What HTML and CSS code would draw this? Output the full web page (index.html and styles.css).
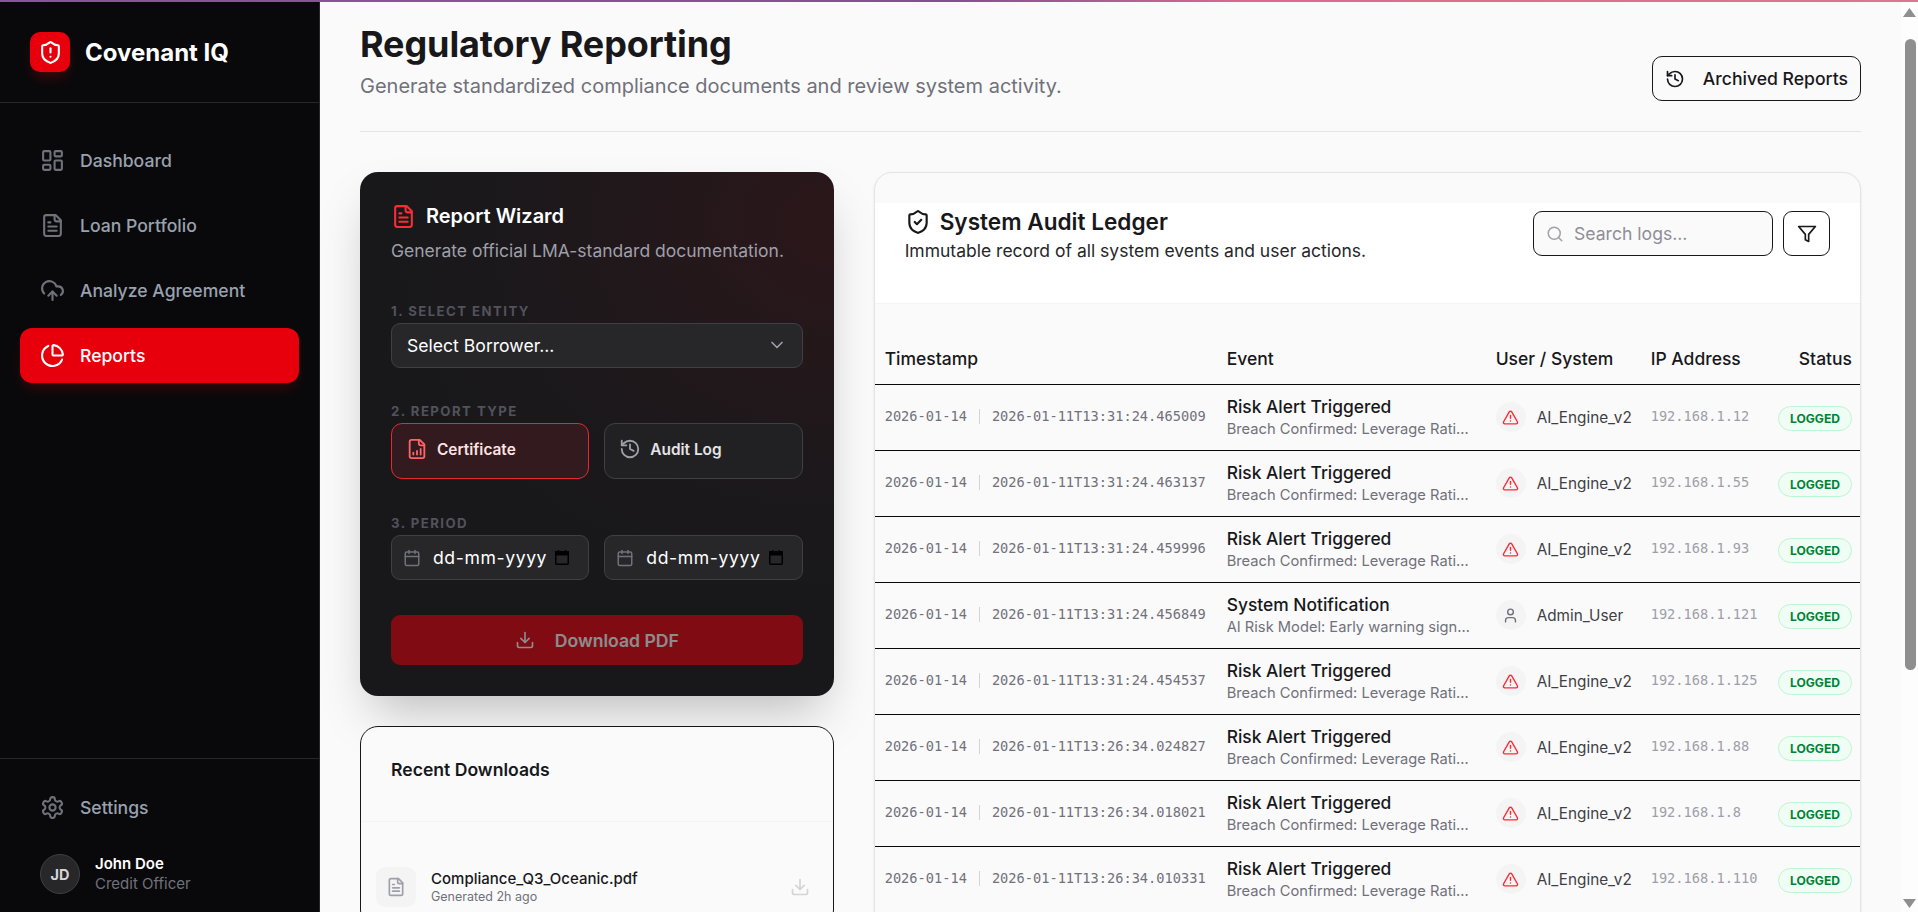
FILE: index.html
```html
<!DOCTYPE html>
<html lang="en">
<head>
<meta charset="utf-8">
<title>Covenant IQ - Regulatory Reporting</title>
<link rel="stylesheet" href="styles.css">
</head>
<body>
<svg class="defs" aria-hidden="true">
  <symbol id="i-shield-alert" viewBox="0 0 24 24"><path d="M20 13c0 5-3.5 7.5-7.66 8.95a1 1 0 0 1-.67-.01C7.5 20.5 4 18 4 13V6a1 1 0 0 1 1-1c2 0 4.5-1.2 6.24-2.72a1.17 1.17 0 0 1 1.52 0C14.51 3.81 17 5 19 5a1 1 0 0 1 1 1z"/><path d="M12 8v4"/><path d="M12 16h.01"/></symbol>
  <symbol id="i-shield-check" viewBox="0 0 24 24"><path d="M20 13c0 5-3.5 7.5-7.66 8.95a1 1 0 0 1-.67-.01C7.5 20.5 4 18 4 13V6a1 1 0 0 1 1-1c2 0 4.5-1.2 6.24-2.72a1.17 1.17 0 0 1 1.52 0C14.51 3.81 17 5 19 5a1 1 0 0 1 1 1z"/><path d="m9 12 2 2 4-4"/></symbol>
  <symbol id="i-dash" viewBox="0 0 24 24"><rect x="3" y="3" width="7" height="9" rx="1"/><rect x="14" y="3" width="7" height="5" rx="1"/><rect x="14" y="12" width="7" height="9" rx="1"/><rect x="3" y="16" width="7" height="5" rx="1"/></symbol>
  <symbol id="i-file" viewBox="0 0 24 24"><path d="M15 2H6a2 2 0 0 0-2 2v16a2 2 0 0 0 2 2h12a2 2 0 0 0 2-2V7Z"/><path d="M14 2v4a2 2 0 0 0 2 2h4"/><path d="M10 9H8"/><path d="M16 13H8"/><path d="M16 17H8"/></symbol>
  <symbol id="i-file-chart" viewBox="0 0 24 24"><path d="M15 2H6a2 2 0 0 0-2 2v16a2 2 0 0 0 2 2h12a2 2 0 0 0 2-2V7Z"/><path d="M14 2v4a2 2 0 0 0 2 2h4"/><path d="M8 18v-2"/><path d="M12 18v-4"/><path d="M16 18v-6"/></symbol>
  <symbol id="i-cloud" viewBox="0 0 24 24"><path d="M12 13v8"/><path d="M4 14.899A7 7 0 1 1 15.71 8h1.79a4.5 4.5 0 0 1 2.5 8.242"/><path d="m8 17 4-4 4 4"/></symbol>
  <symbol id="i-pie" viewBox="0 0 24 24"><path d="M21 12c.552 0 1.005-.449.95-.998a10 10 0 0 0-8.953-8.951c-.55-.055-.998.398-.998.95v8a1 1 0 0 0 1 1z"/><path d="M21.21 15.89A10 10 0 1 1 8 2.83"/></symbol>
  <symbol id="i-gear" viewBox="0 0 24 24"><path d="M12.22 2h-.44a2 2 0 0 0-2 2v.18a2 2 0 0 1-1 1.73l-.43.25a2 2 0 0 1-2 0l-.15-.08a2 2 0 0 0-2.73.73l-.22.38a2 2 0 0 0 .73 2.73l.15.1a2 2 0 0 1 1 1.72v.51a2 2 0 0 1-1 1.74l-.15.09a2 2 0 0 0-.73 2.73l.22.38a2 2 0 0 0 2.73.73l.15-.08a2 2 0 0 1 2 0l.43.25a2 2 0 0 1 1 1.73V20a2 2 0 0 0 2 2h.44a2 2 0 0 0 2-2v-.18a2 2 0 0 1 1-1.73l.43-.25a2 2 0 0 1 2 0l.15.08a2 2 0 0 0 2.73-.73l.22-.39a2 2 0 0 0-.73-2.73l-.15-.08a2 2 0 0 1-1-1.74v-.5a2 2 0 0 1 1-1.74l.15-.09a2 2 0 0 0 .73-2.73l-.22-.38a2 2 0 0 0-2.73-.73l-.15.08a2 2 0 0 1-2 0l-.43-.25a2 2 0 0 1-1-1.73V4a2 2 0 0 0-2-2z"/><circle cx="12" cy="12" r="3"/></symbol>
  <symbol id="i-history" viewBox="0 0 24 24"><path d="M3 12a9 9 0 1 0 9-9 9.75 9.75 0 0 0-6.74 2.74L3 8"/><path d="M3 3v5h5"/><path d="M12 7v5l4 2"/></symbol>
  <symbol id="i-cal" viewBox="0 0 24 24"><path d="M8 2v4"/><path d="M16 2v4"/><rect x="3" y="4" width="18" height="18" rx="2"/><path d="M3 10h18"/></symbol>
  <symbol id="i-down" viewBox="0 0 24 24"><path d="M21 15v4a2 2 0 0 1-2 2H5a2 2 0 0 1-2-2v-4"/><path d="m7 10 5 5 5-5"/><path d="M12 15V3"/></symbol>
  <symbol id="i-search" viewBox="0 0 24 24"><circle cx="11" cy="11" r="8"/><path d="m21 21-4.3-4.3"/></symbol>
  <symbol id="i-filter" viewBox="0 0 24 24"><path d="M22 3H2l8 9.46V19l4 2v-8.54z"/></symbol>
  <symbol id="i-alert" viewBox="0 0 24 24"><path d="m21.73 18-8-14a2 2 0 0 0-3.48 0l-8 14A2 2 0 0 0 4 21h16a2 2 0 0 0 1.73-3"/><path d="M12 9v4"/><path d="M12 17h.01"/></symbol>
  <symbol id="i-user" viewBox="0 0 24 24"><path d="M19 21v-2a4 4 0 0 0-4-4H9a4 4 0 0 0-4 4v2"/><circle cx="12" cy="7" r="4"/></symbol>
  <symbol id="i-chev" viewBox="0 0 24 24"><path d="m6 9 6 6 6-6"/></symbol>
  <symbol id="i-picker" viewBox="0 0 14 15"><path d="M3.5 0v2M10.5 0v2" class="pick-line"/><rect x=".75" y="1.75" width="12.5" height="12.5" rx="1" class="pick-line"/><rect x=".75" y="1.75" width="12.5" height="3" class="pick-fill"/></symbol>
</svg>

<div class="topline"></div>
<div class="app">
  <aside class="sidebar">
    <div class="brand">
      <span class="brand-mark"><svg class="ico ico-25"><use href="#i-shield-alert"/></svg></span>
      <span class="brand-name">Covenant IQ</span>
    </div>
    <nav class="nav">
      <a class="nav-item"><svg class="ico ico-25"><use href="#i-dash"/></svg>Dashboard</a>
      <a class="nav-item"><svg class="ico ico-25"><use href="#i-file"/></svg>Loan Portfolio</a>
      <a class="nav-item"><svg class="ico ico-25"><use href="#i-cloud"/></svg>Analyze Agreement</a>
      <a class="nav-item active"><svg class="ico ico-25"><use href="#i-pie"/></svg>Reports</a>
    </nav>
    <div class="side-foot">
      <a class="nav-item"><svg class="ico ico-25"><use href="#i-gear"/></svg>Settings</a>
      <div class="profile">
        <span class="avatar">JD</span>
        <div class="profile-text">
          <div class="profile-name">John Doe</div>
          <div class="profile-role">Credit Officer</div>
        </div>
      </div>
    </div>
  </aside>

  <main class="main" id="main">
    <header class="page-head">
      <div>
        <h1 class="page-title">Regulatory Reporting</h1>
        <p class="page-sub">Generate standardized compliance documents and review system activity.</p>
      </div>
      <button class="btn-outline"><svg class="ico ico-20"><use href="#i-history"/></svg>Archived Reports</button>
    </header>

    <div class="layout">
      <div class="left-col">
        <section class="wizard">
          <h2 class="wizard-title"><svg class="ico ico-25"><use href="#i-file"/></svg>Report Wizard</h2>
          <p class="wizard-sub">Generate official LMA-standard documentation.</p>

          <label class="step-label step-first">1. Select Entity</label>
          <div class="select-wrap">
            <select class="select"><option>Select Borrower...</option></select>
            <svg class="ico ico-20 select-chev"><use href="#i-chev"/></svg>
          </div>

          <label class="step-label">2. Report Type</label>
          <div class="two-col">
            <button class="type-btn selected"><svg class="ico ico-22"><use href="#i-file-chart"/></svg>Certificate</button>
            <button class="type-btn"><svg class="ico ico-22"><use href="#i-history"/></svg>Audit Log</button>
          </div>

          <label class="step-label step-third">3. Period</label>
          <div class="two-col">
            <div class="date-wrap"><svg class="ico ico-18"><use href="#i-cal"/></svg><span class="date">dd-mm-yyyy</span><svg class="picker"><use href="#i-picker"/></svg></div>
            <div class="date-wrap"><svg class="ico ico-18"><use href="#i-cal"/></svg><span class="date">dd-mm-yyyy</span><svg class="picker"><use href="#i-picker"/></svg></div>
          </div>

          <button class="btn-primary" disabled><svg class="ico ico-20"><use href="#i-down"/></svg>Download PDF</button>
        </section>

        <section class="recent">
          <h3 class="recent-title">Recent Downloads</h3>
          <ul class="recent-list">
            <li class="recent-item">
              <span class="file-box"><svg class="ico ico-20"><use href="#i-file"/></svg></span>
              <div class="file-text">
                <div class="file-name">Compliance_Q3_Oceanic.pdf</div>
                <div class="file-meta">Generated 2h ago</div>
              </div>
              <svg class="ico ico-20 file-dl"><use href="#i-down"/></svg>
            </li>
          </ul>
        </section>
      </div>

      <section class="ledger">
        <div class="ledger-head">
          <div>
            <h2 class="ledger-title"><svg class="ico ico-26"><use href="#i-shield-check"/></svg>System Audit Ledger</h2>
            <p class="ledger-sub">Immutable record of all system events and user actions.</p>
          </div>
          <div class="ledger-tools">
            <div class="search"><svg class="ico ico-18"><use href="#i-search"/></svg><span class="search-ph">Search logs...</span></div>
            <button class="icon-btn"><svg class="ico ico-20"><use href="#i-filter"/></svg></button>
          </div>
        </div>
        <table class="table">
          <colgroup><col class="c1"><col class="c2"><col class="c3"><col class="c4"><col></colgroup>
          <thead>
            <tr><th>Timestamp</th><th>Event</th><th>User / System</th><th>IP Address</th><th class="right">Status</th></tr>
          </thead>
          <tbody>
            <tr><td class="ts"><span>2026-01-14</span><i class="sep"></i><span>2026-01-11T13:31:24.465009</span></td><td class="ev-cell"><div class="ev">Risk Alert Triggered</div><div class="ev-sub">Breach Confirmed: Leverage Ratio exceeded threshold</div></td><td><div class="who"><span class="who-ico red"><svg class="ico ico-17"><use href="#i-alert"/></svg></span>AI_Engine_v2</div></td><td class="ip">192.168.1.12</td><td class="right"><span class="badge">LOGGED</span></td></tr>
            <tr><td class="ts"><span>2026-01-14</span><i class="sep"></i><span>2026-01-11T13:31:24.463137</span></td><td class="ev-cell"><div class="ev">Risk Alert Triggered</div><div class="ev-sub">Breach Confirmed: Leverage Ratio exceeded threshold</div></td><td><div class="who"><span class="who-ico red"><svg class="ico ico-17"><use href="#i-alert"/></svg></span>AI_Engine_v2</div></td><td class="ip">192.168.1.55</td><td class="right"><span class="badge">LOGGED</span></td></tr>
            <tr><td class="ts"><span>2026-01-14</span><i class="sep"></i><span>2026-01-11T13:31:24.459996</span></td><td class="ev-cell"><div class="ev">Risk Alert Triggered</div><div class="ev-sub">Breach Confirmed: Leverage Ratio exceeded threshold</div></td><td><div class="who"><span class="who-ico red"><svg class="ico ico-17"><use href="#i-alert"/></svg></span>AI_Engine_v2</div></td><td class="ip">192.168.1.93</td><td class="right"><span class="badge">LOGGED</span></td></tr>
            <tr><td class="ts"><span>2026-01-14</span><i class="sep"></i><span>2026-01-11T13:31:24.456849</span></td><td class="ev-cell"><div class="ev">System Notification</div><div class="ev-sub">AI Risk Model: Early warning signals detected</div></td><td><div class="who"><span class="who-ico"><svg class="ico ico-17"><use href="#i-user"/></svg></span>Admin_User</div></td><td class="ip">192.168.1.121</td><td class="right"><span class="badge">LOGGED</span></td></tr>
            <tr><td class="ts"><span>2026-01-14</span><i class="sep"></i><span>2026-01-11T13:31:24.454537</span></td><td class="ev-cell"><div class="ev">Risk Alert Triggered</div><div class="ev-sub">Breach Confirmed: Leverage Ratio exceeded threshold</div></td><td><div class="who"><span class="who-ico red"><svg class="ico ico-17"><use href="#i-alert"/></svg></span>AI_Engine_v2</div></td><td class="ip">192.168.1.125</td><td class="right"><span class="badge">LOGGED</span></td></tr>
            <tr><td class="ts"><span>2026-01-14</span><i class="sep"></i><span>2026-01-11T13:26:34.024827</span></td><td class="ev-cell"><div class="ev">Risk Alert Triggered</div><div class="ev-sub">Breach Confirmed: Leverage Ratio exceeded threshold</div></td><td><div class="who"><span class="who-ico red"><svg class="ico ico-17"><use href="#i-alert"/></svg></span>AI_Engine_v2</div></td><td class="ip">192.168.1.88</td><td class="right"><span class="badge">LOGGED</span></td></tr>
            <tr><td class="ts"><span>2026-01-14</span><i class="sep"></i><span>2026-01-11T13:26:34.018021</span></td><td class="ev-cell"><div class="ev">Risk Alert Triggered</div><div class="ev-sub">Breach Confirmed: Leverage Ratio exceeded threshold</div></td><td><div class="who"><span class="who-ico red"><svg class="ico ico-17"><use href="#i-alert"/></svg></span>AI_Engine_v2</div></td><td class="ip">192.168.1.8</td><td class="right"><span class="badge">LOGGED</span></td></tr>
            <tr><td class="ts"><span>2026-01-14</span><i class="sep"></i><span>2026-01-11T13:26:34.010331</span></td><td class="ev-cell"><div class="ev">Risk Alert Triggered</div><div class="ev-sub">Breach Confirmed: Leverage Ratio exceeded threshold</div></td><td><div class="who"><span class="who-ico red"><svg class="ico ico-17"><use href="#i-alert"/></svg></span>AI_Engine_v2</div></td><td class="ip">192.168.1.110</td><td class="right"><span class="badge">LOGGED</span></td></tr>
            <tr><td class="ts"><span>2026-01-14</span><i class="sep"></i><span>2026-01-11T13:26:34.006412</span></td><td class="ev-cell"><div class="ev">Risk Alert Triggered</div><div class="ev-sub">Breach Confirmed: Leverage Ratio exceeded threshold</div></td><td><div class="who"><span class="who-ico red"><svg class="ico ico-17"><use href="#i-alert"/></svg></span>AI_Engine_v2</div></td><td class="ip">192.168.1.47</td><td class="right"><span class="badge">LOGGED</span></td></tr>
          </tbody>
        </table>
      </section>
    </div>
  </main>

  <div class="rail" aria-hidden="true">
    <div class="rail-btn rail-up"><svg class="rail-arrow" viewBox="0 0 13 9"><path d="M6.5 0 13 9H0z"/></svg></div>
    <div class="rail-track"><div class="rail-thumb"></div></div>
    <div class="rail-btn rail-down"><svg class="rail-arrow" viewBox="0 0 13 9"><path d="M0 0h13L6.5 9z"/></svg></div>
  </div>
</div>
<script src="app.js"></script>
</body>
</html>
```

FILE: styles.css
```css
* { box-sizing: border-box; }
html, body { height: 100%; margin: 0; }
body {
  display: flex;
  flex-direction: column;
  overflow: hidden;
  font-family: Inter, "Liberation Sans", sans-serif;
  color: #18181b;
  background: #fafafa;
}
.defs { width: 0; height: 0; position: absolute; }
.ico { fill: none; stroke: currentColor; stroke-width: 2; stroke-linecap: round; stroke-linejoin: round; flex: none; display: block; }
.ico-17 { width: 17px; height: 17px; }
.ico-18 { width: 18px; height: 18px; }
.ico-20 { width: 20px; height: 20px; }
.ico-22 { width: 22px; height: 22px; }
.ico-25 { width: 25px; height: 25px; }
.ico-26 { width: 26px; height: 26px; }

.topline { height: 2px; flex: none; background: linear-gradient(90deg, #8b559b, #85508f 50%, #d96b8f 65%, #d9788f); }
.app { flex: 1; min-height: 0; display: flex; }

/* sidebar */
.sidebar { width: 320px; flex: none; display: flex; flex-direction: column; background: #09090b; border-right: 1px solid #27272a; }
.brand { height: 101px; flex: none; display: flex; align-items: center; gap: 15px; padding: 0 30px; border-bottom: 1px solid #27272a; }
.brand-mark { width: 40px; height: 40px; border-radius: 10px; background: #e7000b; color: #fff; display: flex; align-items: center; justify-content: center; box-shadow: 0 8px 14px -4px rgba(231,0,11,.3); }
.brand-name { font-size: 24px; font-weight: 700; color: #fff; }
.nav { flex: 1; display: flex; flex-direction: column; gap: 10px; padding: 30px 20px; }
.nav-item { height: 55px; display: flex; align-items: center; gap: 15px; padding: 0 20px; border-radius: 12px; font-size: 17.6px; font-weight: 500; color: #99a1af; }
.nav-item .ico { color: #71717b; }
.nav-item.active { background: #e7000b; color: #fff; box-shadow: 0 8px 14px -4px rgba(231,0,11,.25); }
.nav-item.active .ico { color: #fff; }
.side-foot { flex: none; height: 154px; padding: 21px 20px 0; border-top: 1px solid #27272a; }
.profile { display: flex; align-items: center; gap: 15px; padding: 0 20px; margin-top: 19px; }
.avatar { width: 40px; height: 40px; border-radius: 50%; background: #27272a; border: 1px solid #3f3f46; color: #d4d4d8; font-size: 14.5px; font-weight: 700; display: flex; align-items: center; justify-content: center; }
.profile-name { font-size: 15px; font-weight: 600; color: #fff; line-height: 20px; }
.profile-role { font-size: 15px; color: #71717b; line-height: 20px; }

/* main */
.main { flex: 1; min-width: 0; overflow-y: auto; scrollbar-width: none; padding: 51px 40px 40px; background: #fafafa; }
.rail { width: 17px; flex: none; display: flex; flex-direction: column; background: #fdfdfd; }
.rail-btn { height: 17px; flex: none; display: flex; justify-content: center; }
.rail-up { padding-top: 6px; }
.rail-down { padding-top: 4px; }
.rail-arrow { width: 13px; height: 9px; fill: #8f8f8f; display: block; }
.rail-track { flex: 1; min-height: 0; padding-top: 20px; }
.rail-thumb { width: 11px; height: 631px; margin-left: 4px; border-radius: 6px; background: #8f8f8f; }

.page-head { display: flex; justify-content: space-between; align-items: flex-end; padding-bottom: 31px; border-bottom: 1px solid #e4e4e7; }
.page-title { margin: 0; font-size: 36px; line-height: 40px; font-weight: 700; color: #18181b; letter-spacing: -.1px; }
.page-sub { margin: 8px 0 0; font-size: 20px; line-height: 28px; color: #71717b; }
.btn-outline { height: 45px; margin-bottom: -1px; display: flex; align-items: center; gap: 18px; padding: 0 12px; background: transparent; border: 1px solid #18181b; border-radius: 10px; font: 500 17.6px Inter, sans-serif; color: #18181b; }

.layout { display: grid; grid-template-columns: repeat(3, minmax(0, 1fr)); column-gap: 40px; align-items: start; margin-top: 40px; }
.left-col { display: flex; flex-direction: column; gap: 30px; min-width: 0; }

/* wizard */
.wizard { padding: 30px 31px 31px; border-radius: 18px; color: #fff; background: radial-gradient(120% 90% at 100% 10%, #2b171a 0%, #1c181b 55%, #18181b 80%), #18181b; box-shadow: 0 25px 50px -12px rgba(0,0,0,.25); }
.wizard-title { margin: 0; display: flex; align-items: center; gap: 10px; font-size: 20px; line-height: 28px; font-weight: 600; }
.wizard-title .ico { color: #fb2c36; }
.wizard-sub { margin: 8px 0 0; font-size: 17.5px; line-height: 26px; color: #9f9fa9; }
.step-label { display: block; margin: 35px 0 4px; font-size: 13.2px; line-height: 16px; font-weight: 700; letter-spacing: .11em; text-transform: uppercase; color: #52525c; }
.step-first { margin-top: 39px; }
.step-third { margin-top: 36px; }
.select-wrap { position: relative; }
.select { display: block; width: 100%; height: 45px; appearance: none; padding: 0 15px; border: 1px solid #3f3f46; border-radius: 9px; background: #27272a; color: #fff; font: 400 17.6px Inter, sans-serif; }
.select-chev { position: absolute; right: 16px; top: 12px; color: #9f9fa9; }
.two-col { display: grid; grid-template-columns: repeat(2, minmax(0, 1fr)); gap: 15px; }
.type-btn { height: 56px; display: flex; align-items: center; gap: 9px; padding: 0 14px 4px; border: 1px solid #3f3f46; border-radius: 11px; background: #212124; color: #e4e4e7; font: 600 15.4px Inter, sans-serif; }
.type-btn .ico { color: #9f9fa9; }
.type-btn.selected { background: #321a1e; border-color: #e7282f; color: #ffe2e2; }
.type-btn.selected .ico { color: #ff6467; }
.date-wrap { height: 45px; display: flex; align-items: center; gap: 12px; padding: 0 19px 0 11px; border: 1px solid #3f3f46; border-radius: 9px; background: #27272a; color: #71717b; }
.date { flex: 1; min-width: 0; color: #fff; font-size: 17.6px; font-weight: 400; letter-spacing: .6px; white-space: nowrap; }
.picker { width: 14px; height: 15px; flex: none; display: block; }
.pick-line { fill: none; stroke: #000; stroke-width: 1.5; }
.pick-fill { fill: #000; stroke: #000; stroke-width: 1.5; }
.btn-primary { width: 100%; height: 50px; margin-top: 35px; display: flex; align-items: center; justify-content: center; gap: 20px; border: 0; border-radius: 9px; background: #e7000b; color: #fff; opacity: .5; font: 600 17.6px Inter, sans-serif; }

/* recent */
.recent { border: 1px solid #18181b; border-radius: 18px; background: #fafafa; }
.recent-title { margin: 0; height: 95px; padding: 30px 30px 0; font-size: 17.6px; line-height: 26px; font-weight: 600; border-bottom: 1px solid #f4f4f5; }
.recent-list { list-style: none; margin: 0; padding: 45px 15px 20px; }
.recent-item { display: flex; align-items: center; gap: 15px; }
.file-box { width: 40px; height: 40px; border-radius: 9px; background: #f4f4f5; color: #9f9fa9; display: flex; align-items: center; justify-content: center; }
.file-text { flex: 1; min-width: 0; padding-top: 1px; }
.file-name { font-size: 15px; line-height: 18px; font-weight: 500; color: #18181b; }
.file-meta { font-size: 12.5px; line-height: 18px; color: #71717b; }
.file-dl { color: #d4d4d8; margin-right: 8px; }

/* ledger */
.ledger { grid-column: span 2; min-width: 0; padding: 30px 0 19px; border: 1px solid #e4e4e7; border-radius: 18px; background: #fafafa; box-shadow: 0 1px 3px rgba(0,0,0,.08); overflow: hidden; }
.ledger-head { height: 101px; display: flex; justify-content: space-between; align-items: flex-start; padding: 6px 30px 0; background: #fff; border-bottom: 1px solid #f4f4f5; }
.ledger-title { margin: 0; display: flex; align-items: center; gap: 9px; font-size: 22.6px; line-height: 26px; font-weight: 600; color: #18181b; }
.ledger-sub { margin: 4px 0 0; font-size: 17.5px; line-height: 24px; color: #27272a; }
.ledger-tools { display: flex; gap: 10px; padding-top: 2px; }
.search { width: 240px; height: 45px; display: flex; align-items: center; gap: 10px; padding: 0 12px; border: 1px solid #18181b; border-radius: 9px; background: #fafafa; color: #a1a1aa; }
.search-ph { font-size: 17.6px; color: #8e8e98; }
.icon-btn { width: 47px; height: 45px; display: flex; align-items: center; justify-content: center; padding: 0; background: #fff; border: 1px solid #18181b; border-radius: 9px; color: #18181b; }

.table { width: 100%; border-collapse: collapse; table-layout: fixed; background: #fafafa; }
.c1 { width: 342px; } .c2 { width: 269px; } .c3 { width: 155px; } .c4 { width: 129px; }
.table th { height: 80px; padding: 43px 9px 12px 10px; text-align: left; vertical-align: middle; font-size: 17.5px; line-height: 24px; font-weight: 500; color: #18181b; border-bottom: 1px solid #09090b; }
.table td { height: 66px; padding: 0 9px 0 10px; vertical-align: middle; border-bottom: 1px solid #09090b; }
.table .right { text-align: right; padding-left: 0; padding-right: 8px; }
.table .ev-cell { padding-top: 1px; }
.table .ts { padding-bottom: 2px; font: 13.66px "DejaVu Sans Mono", monospace; color: #71717b; white-space: nowrap; }
.sep { display: inline-block; width: 1px; height: 15px; margin: 0 12px; background: #d4d4d8; vertical-align: middle; }
.ev { font-size: 17.4px; line-height: 22px; font-weight: 500; color: #18181b; }
.ev-sub { margin-top: 1px; font-size: 14.7px; line-height: 20px; color: #71717b; white-space: nowrap; overflow: hidden; text-overflow: ellipsis; width: 246px; }
.who { display: flex; align-items: center; gap: 11px; font-size: 15.3px; font-weight: 400; color: #3f3f46; white-space: nowrap; }
.who-ico { width: 30px; height: 30px; flex: none; border-radius: 50%; background: #f4f4f5; color: #71717b; display: flex; align-items: center; justify-content: center; }
.who-ico.red { color: #fb2c36; }
.table .ip { padding-bottom: 2px; font: 13.66px "DejaVu Sans Mono", monospace; color: #9f9fa9; }
.badge { display: inline-block; height: 25px; margin-top: 2px; padding: 0 11px; line-height: 23px; border: 1px solid #b9f8cf; border-radius: 13px; background: #f0fdf4; color: #008236; font-size: 12.1px; font-weight: 700; }
```

FILE: app.js
```js
document.getElementById('main').scrollTop = 29;
```
